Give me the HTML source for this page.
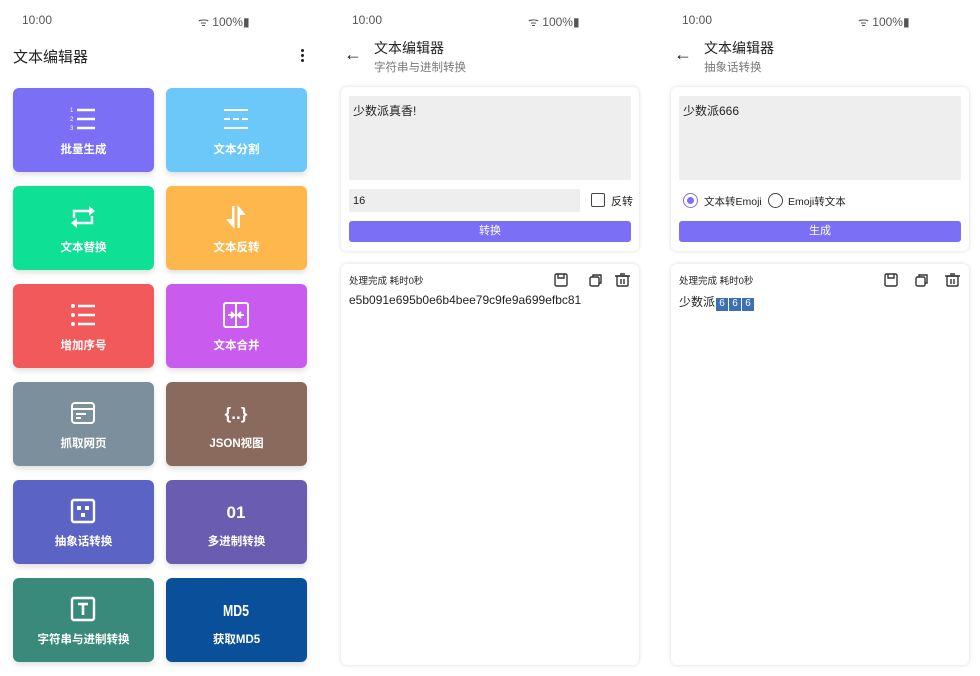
<!DOCTYPE html><html><head><meta charset="utf-8"><style>
*{margin:0;padding:0;box-sizing:border-box}
body{width:980px;height:676px;background:#fff;position:relative;overflow:hidden;font-family:"Liberation Sans","Noto Sans CJK SC",sans-serif;color:#222}
.a{position:absolute}
.st{font-size:12px;color:#555}
.tile{position:absolute;width:141px;height:84px;border-radius:6px;color:#fff;box-shadow:0 3px 6px rgba(0,0,0,.12)}
.tile .lb{position:absolute;left:0;right:0;top:53px;text-align:center;font-size:11.5px;font-weight:bold}
.tile svg{position:absolute;left:56px;top:17px}
.card{position:absolute;border-radius:6px;background:#fff;box-shadow:0 0 4px rgba(0,0,0,.15)}
.gray{position:absolute;background:#eee;border-radius:2px;font-size:12px;padding:6px 4px}
.btn{position:absolute;background:#7b6ff5;border-radius:3px;color:#fff;font-size:11px;text-align:center;line-height:21px}
</style></head><body>
<div class="a st" style="left:22px;top:13px">10:00</div><div class="a st" style="left:198px;top:13px">ᯤ 100%▮</div>
<div class="a st" style="left:352px;top:13px">10:00</div><div class="a st" style="left:528px;top:13px">ᯤ 100%▮</div>
<div class="a st" style="left:682px;top:13px">10:00</div><div class="a st" style="left:858px;top:13px">ᯤ 100%▮</div>
<div class="a" style="left:13px;top:46px;font-size:15px">文本编辑器</div>
<div class="a" style="left:301px;top:49px;width:4px">
<div style="width:3px;height:3px;background:#222;border-radius:50%;margin-bottom:2px"></div><div style="width:3px;height:3px;background:#222;border-radius:50%;margin-bottom:2px"></div><div style="width:3px;height:3px;background:#222;border-radius:50%"></div></div>

<div class="tile" style="left:13px;top:88px;background:#7b6ff5"><svg width="28" height="28"><text x="1" y="7" font-size="6" fill="#fff">1</text><text x="1" y="16" font-size="6" fill="#fff">2</text><text x="1" y="25" font-size="6" fill="#fff">3</text><g stroke="#fff" stroke-width="2.4"><path d="M8 5H26M8 14H26M8 23H26"/></g></svg><div class="lb">批量生成</div></div>
<div class="tile" style="left:166px;top:88px;background:#6cc8f8"><svg width="28" height="28"><g stroke="#fff" stroke-width="2"><path d="M2 5H26M2 23H26M2 14H8M11 14H17M20 14H26"/></g></svg><div class="lb">文本分割</div></div>
<div class="tile" style="left:13px;top:186px;background:#0ee096"><svg width="28" height="28"><g stroke="#fff" stroke-width="2.4" fill="none"><path d="M5 15V8H21"/><path d="M23 13V20H7"/></g><path d="M20 3L26 8L20 13Z M8 15L2 20L8 25Z" fill="#fff"/></svg><div class="lb">文本替换</div></div>
<div class="tile" style="left:166px;top:186px;background:#feb74c"><svg width="28" height="28"><path d="M10 3H12.5V26L4 16H10Z M15.5 25H18V12H24L15.5 2Z" fill="#fff"/></svg><div class="lb">文本反转</div></div>
<div class="tile" style="left:13px;top:284px;background:#f2595b"><svg width="28" height="28"><g fill="#fff"><circle cx="4" cy="5" r="2"/><circle cx="4" cy="14" r="2"/><circle cx="4" cy="23" r="2"/></g><g stroke="#fff" stroke-width="2.4"><path d="M9 5H26M9 14H26M9 23H26"/></g></svg><div class="lb">增加序号</div></div>
<div class="tile" style="left:166px;top:284px;background:#c95cee"><svg width="28" height="28"><g stroke="#fff" stroke-width="2" fill="none"><rect x="2" y="2" width="24" height="24" rx="2"/><path d="M14 2V26"/><path d="M6 14H11M9 11L12 14L9 17M22 14H17M19 11L16 14L19 17"/></g></svg><div class="lb">文本合并</div></div>
<div class="tile" style="left:13px;top:382px;background:#7b8f9c"><svg width="28" height="28"><g stroke="#fff" stroke-width="2" fill="none"><rect x="3" y="4" width="22" height="20" rx="3"/><path d="M3 10H25M7 15H17M7 19H12"/></g></svg><div class="lb">抓取网页</div></div>
<div class="tile" style="left:166px;top:382px;background:#8b6a5e"><svg width="28" height="28"><text x="14" y="20" font-size="17" font-weight="bold" fill="#fff" text-anchor="middle">{..}</text></svg><div class="lb">JSON视图</div></div>
<div class="tile" style="left:13px;top:480px;background:#5b63c5"><svg width="28" height="28"><rect x="3" y="3" width="22" height="22" rx="2" fill="none" stroke="#fff" stroke-width="2.4"/><g fill="#fff"><rect x="8" y="9" width="4" height="4"/><rect x="16" y="9" width="4" height="4"/><rect x="12" y="16" width="4" height="4"/></g></svg><div class="lb">抽象话转换</div></div>
<div class="tile" style="left:166px;top:480px;background:#6a5cb0"><svg width="28" height="28"><text x="14" y="21" font-size="17" font-weight="bold" fill="#fff" text-anchor="middle">01</text></svg><div class="lb">多进制转换</div></div>
<div class="tile" style="left:13px;top:578px;background:#3a8a7c"><svg width="28" height="28"><rect x="3" y="3" width="22" height="22" rx="2" fill="none" stroke="#fff" stroke-width="2.4"/><path d="M9 9H19M14 9V20" stroke="#fff" stroke-width="2.6"/></svg><div class="lb">字符串与进制转换</div></div>
<div class="tile" style="left:166px;top:578px;background:#0a4f9a"><svg width="28" height="28" style="overflow:visible"><text x="14" y="21" font-size="16" font-weight="bold" fill="#fff" text-anchor="middle" textLength="26" lengthAdjust="spacingAndGlyphs">MD5</text></svg><div class="lb">获取MD5</div></div>

<div class="a" style="left:344px;top:44px;font-size:18px">←</div>
<div class="a" style="left:374px;top:38px;font-size:14px">文本编辑器</div>
<div class="a" style="left:374px;top:59px;font-size:11.5px;color:#777">字符串与进制转换</div>
<div class="card" style="left:341px;top:87px;width:298px;height:164px"></div>
<div class="gray" style="left:349px;top:96px;width:282px;height:84px;padding:6px 4px">少数派真香!</div>
<div class="gray" style="left:349px;top:189px;width:231px;height:23px;font-size:11px">16</div>
<div class="a" style="left:591px;top:193px;width:14px;height:14px;border:1.5px solid #444;border-radius:2px"></div>
<div class="a" style="left:611px;top:193px;font-size:11px">反转</div>
<div class="btn" style="left:349px;top:221px;width:282px;height:21px">转换</div>
<div class="card" style="left:341px;top:264px;width:298px;height:401px"></div>
<div class="a" style="left:349px;top:273px;font-size:9.5px">处理完成 耗时0秒</div>
<div class="a" style="left:349px;top:293px;font-size:12px">e5b091e695b0e6b4bee79c9fe9a699efbc81</div>

<div class="a" style="left:674px;top:44px;font-size:18px">←</div>
<div class="a" style="left:704px;top:38px;font-size:14px">文本编辑器</div>
<div class="a" style="left:704px;top:59px;font-size:11.5px;color:#777">抽象话转换</div>
<div class="card" style="left:671px;top:87px;width:298px;height:164px"></div>
<div class="gray" style="left:679px;top:96px;width:282px;height:84px">少数派666</div>
<div class="a" style="left:683px;top:193px;width:15px;height:15px;border:1.5px solid #7b6ff5;border-radius:50%"><div style="margin:2.5px;width:7px;height:7px;border-radius:50%;background:#7b6ff5"></div></div>
<div class="a" style="left:704px;top:194px;font-size:10.5px">文本转Emoji</div>
<div class="a" style="left:768px;top:193px;width:15px;height:15px;border:1.5px solid #444;border-radius:50%"></div>
<div class="a" style="left:788px;top:194px;font-size:10.5px">Emoji转文本</div>
<div class="btn" style="left:679px;top:221px;width:282px;height:21px">生成</div>
<div class="card" style="left:671px;top:264px;width:298px;height:401px"></div>
<div class="a" style="left:679px;top:273px;font-size:9.5px">处理完成 耗时0秒</div>
<div class="a" style="left:679px;top:293px;font-size:12px">少数派<span style="display:inline-block;width:12px;height:13px;background:#3b6fb6;color:#fff;font-size:10px;text-align:center;margin-left:1px">6</span><span style="display:inline-block;width:12px;height:13px;background:#3b6fb6;color:#fff;font-size:10px;text-align:center;margin-left:1px">6</span><span style="display:inline-block;width:12px;height:13px;background:#3b6fb6;color:#fff;font-size:10px;text-align:center;margin-left:1px">6</span></div>

<svg class="a" style="left:553px;top:272px" width="80" height="16"><g stroke="#333" stroke-width="1.4" fill="none"><rect x="2" y="2" width="12" height="12" rx="1.5"/><path d="M5 2V6H11V2"/><rect x="37" y="5" width="9" height="9" rx="1.5"/><path d="M40 5V3H48V11H46"/><rect x="64" y="4" width="11" height="10" rx="1"/><path d="M62 4H77M67 2H72M68 7V12M71 7V12"/></g></svg>
<svg class="a" style="left:883px;top:272px" width="80" height="16"><g stroke="#333" stroke-width="1.4" fill="none"><rect x="2" y="2" width="12" height="12" rx="1.5"/><path d="M5 2V6H11V2"/><rect x="33" y="5" width="9" height="9" rx="1.5"/><path d="M36 5V3H44V11H42"/><rect x="64" y="4" width="11" height="10" rx="1"/><path d="M62 4H77M67 2H72M68 7V12M71 7V12"/></g></svg>
</body></html>
